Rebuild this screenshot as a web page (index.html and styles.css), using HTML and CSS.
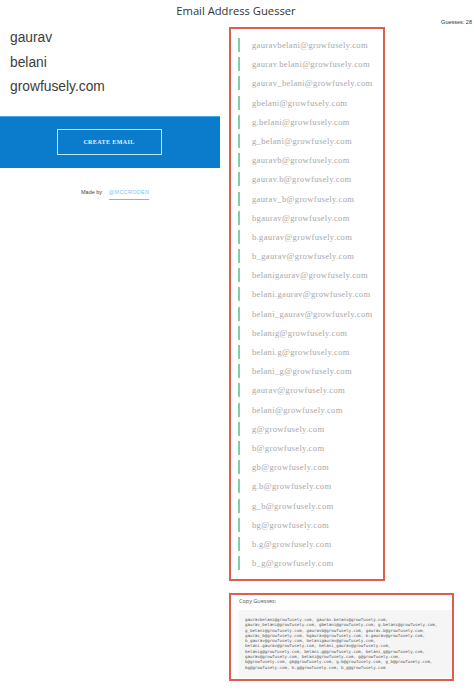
FILE: index.html
```html
<!DOCTYPE html>
<html lang="en">
<head>
    <meta charset="UTF-8">
    <meta name="viewport" content="width=device-width, initial-scale=1.0">
    <title>Email Address Guesser</title>
    <link rel="stylesheet" href="styles.css">
</head>
<body>
    <header class="top-bar">
        <span></span>
        <h1>Email Address Guesser</h1>
        <span class="guess-count">Guesses: 28</span>
    </header>

    <div class="page">
        <div class="left-col">
            <div class="name-fields">
                <div>gaurav</div>
                <div>belani</div>
                <div>growfusely.com</div>
            </div>

            <div class="create-panel">
                <button class="create-btn">CREATE EMAIL</button>
            </div>

            <p class="made-by">Made by <a href="#">@MCCRODEN</a></p>
        </div>

        <div class="right-col">
            <ul class="guess-list">
                <li>gauravbelani@growfusely.com</li>
                <li>gaurav.belani@growfusely.com</li>
                <li>gaurav_belani@growfusely.com</li>
                <li>gbelani@growfusely.com</li>
                <li>g.belani@growfusely.com</li>
                <li>g_belani@growfusely.com</li>
                <li>gauravb@growfusely.com</li>
                <li>gaurav.b@growfusely.com</li>
                <li>gaurav_b@growfusely.com</li>
                <li>bgaurav@growfusely.com</li>
                <li>b.gaurav@growfusely.com</li>
                <li>b_gaurav@growfusely.com</li>
                <li>belanigaurav@growfusely.com</li>
                <li>belani.gaurav@growfusely.com</li>
                <li>belani_gaurav@growfusely.com</li>
                <li>belanig@growfusely.com</li>
                <li>belani.g@growfusely.com</li>
                <li>belani_g@growfusely.com</li>
                <li>gaurav@growfusely.com</li>
                <li>belani@growfusely.com</li>
                <li>g@growfusely.com</li>
                <li>b@growfusely.com</li>
                <li>gb@growfusely.com</li>
                <li>g.b@growfusely.com</li>
                <li>g_b@growfusely.com</li>
                <li>bg@growfusely.com</li>
                <li>b.g@growfusely.com</li>
                <li>b_g@growfusely.com</li>
            </ul>

            <div class="copy-box">
                <div class="copy-label">Copy Guesses:</div>
                <pre class="copy-text">gauravbelani@growfusely.com, gaurav.belani@growfusely.com,
gaurav_belani@growfusely.com, gbelani@growfusely.com, g.belani@growfusely.com,
g_belani@growfusely.com, gauravb@growfusely.com, gaurav.b@growfusely.com,
gaurav_b@growfusely.com, bgaurav@growfusely.com, b.gaurav@growfusely.com,
b_gaurav@growfusely.com, belanigaurav@growfusely.com,
belani.gaurav@growfusely.com, belani_gaurav@growfusely.com,
belanig@growfusely.com, belani.g@growfusely.com, belani_g@growfusely.com,
gaurav@growfusely.com, belani@growfusely.com, g@growfusely.com,
b@growfusely.com, gb@growfusely.com, g.b@growfusely.com, g_b@growfusely.com,
bg@growfusely.com, b.g@growfusely.com, b_g@growfusely.com</pre>
            </div>
        </div>
    </div>
</body>
</html>
```

FILE: styles.css
```css
body {
    margin: 0;
    background-color: #fff;
    font-family: "Liberation Sans", Arial, sans-serif;
    overflow: hidden;
}

/* Top bar */
.top-bar {
    display: grid;
    grid-template-columns: 1fr auto 1fr;
    height: 27px;
    padding-right: 2px;
}
.top-bar h1 {
    margin: 3px 0 0 0;
    font-family: "Open Sans", sans-serif;
    font-size: 11.2px;
    line-height: 16px;
    font-weight: 400;
    color: #333;
}
.guess-count {
    justify-self: end;
    margin-top: 18px;
    font-size: 5.5px;
    line-height: 8px;
    color: #333;
}

.page {
    display: flex;
}

/* Left column */
.left-col {
    width: 220px;
}
.name-fields {
    display: flex;
    flex-direction: column;
    gap: 6.5px;
    padding: 2px 0 0 10px;
    font-size: 13.8px;
    line-height: 18px;
    color: #3c3c3c;
}
.create-panel {
    display: flex;
    justify-content: center;
    margin-top: 20px;
    padding: 12px 0 13px 0;
    background-color: #0b7ccc;
    border-top: 1px solid #45a6e8;
}
.create-btn {
    width: 105px;
    height: 26px;
    margin-left: -2px;
    padding: 0;
    border: 1px solid #bfe6fb;
    background: transparent;
    color: #e4f2fb;
    font-family: "Liberation Serif", serif;
    font-size: 6px;
    font-weight: 700;
    letter-spacing: 0.4px;
}
.made-by {
    margin: 19px 0 0 81px;
    font-size: 5.5px;
    line-height: 10px;
    color: #444;
}
.made-by a {
    display: inline-block;
    margin-left: 5px;
    padding-bottom: 2px;
    border-bottom: 1px solid #6cc0ee;
    color: #7cc7ee;
    letter-spacing: 0.3px;
    text-decoration: none;
}

/* Right column */
.right-col {
    padding-left: 9px;
}
.guess-list {
    display: flex;
    flex-direction: column;
    gap: 5.2px;
    box-sizing: content-box;
    width: 152px;
    height: 541px;
    margin: 0;
    padding: 9px 0 0 0;
    list-style-type: none;
    border: 2px solid #d8604c;
}
.guess-list li {
    margin-left: 7px;
    height: 14px;
    padding-left: 12px;
    border-left: 2px solid #7fcfae;
    font-family: "Liberation Serif", serif;
    font-size: 8.6px;
    line-height: 14px;
    letter-spacing: 0.32px;
    color: #a8a8a8;
}

.copy-box {
    width: 221px;
    height: 84px;
    margin-top: 12px;
    border: 2px solid #d8604c;
}
.copy-label {
    padding: 2px 0 0 8px;
    font-family: "Open Sans", sans-serif;
    font-size: 5.5px;
    line-height: 9px;
    color: #555;
}
.copy-text {
    margin: 4px 0 0 8px;
    padding: 7px 0 8px 6px;
    background-color: #f5f5f5;
    font-family: "DejaVu Sans Mono", monospace;
    font-size: 4.1px;
    line-height: 5.3px;
    color: #555;
}
```
